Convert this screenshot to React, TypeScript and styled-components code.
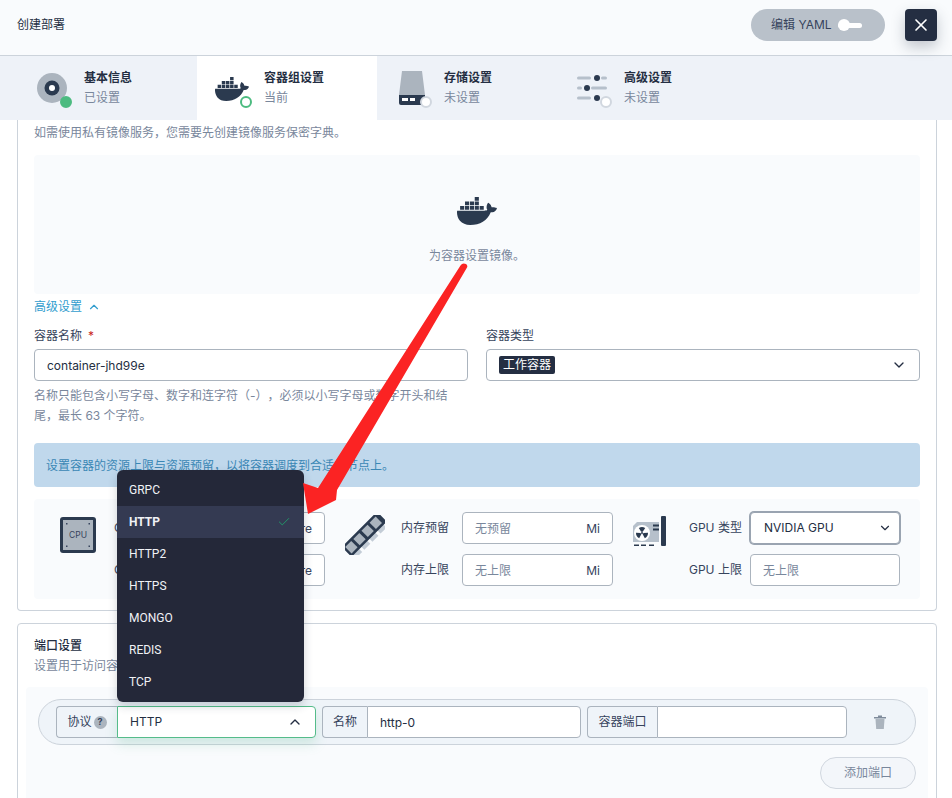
import styled, { createGlobalStyle } from "styled-components";
import { Check, ChevronDown, ChevronUp, X } from "lucide-react";
import { FaDocker } from "react-icons/fa";

const GlobalStyle = createGlobalStyle`
  html, body {
    margin: 0;
    height: 100%;
    overflow: hidden;
    background: #fff;
  }
  body {
    font-family: Inter, "Noto Sans CJK SC", "Noto Sans", sans-serif;
    font-size: 12px;
    line-height: 20px;
    color: #242e42;
    text-spacing-trim: space-all;
  }
  * {
    box-sizing: border-box;
  }
`;

const Page = styled.div`
  position: relative;
  width: 952px;
  height: 798px;
  overflow: hidden;
  background: #fff;
`;

const Header = styled.header`
  display: flex;
  align-items: center;
  justify-content: space-between;
  height: 56px;
  padding: 0 15px 5px 17px;
  background: #f9fbfd;
  border-bottom: 1px solid #ccd3db;
`;

const Title = styled.div`
  margin-bottom: 1px;
  color: #242e42;
`;

const HeaderActions = styled.div`
  display: flex;
  align-items: center;
  gap: 20px;
`;

const YamlButton = styled.div`
  display: flex;
  align-items: center;
  gap: 6px;
  width: 134px;
  height: 32px;
  padding-left: 20px;
  border-radius: 16px;
  background: #b9c1ca;
  color: #36435c;
`;

const YamlToggle = styled.span`
  position: relative;
  display: block;
  width: 24px;
  height: 5px;
  border-radius: 3px;
  background: #fff;

  &::before {
    content: "";
    position: absolute;
    left: 0;
    top: -3.5px;
    width: 12px;
    height: 12px;
    border-radius: 50%;
    background: #fff;
  }
`;

const CloseButton = styled.div`
  display: flex;
  align-items: center;
  justify-content: center;
  width: 32px;
  height: 32px;
  border-radius: 4px;
  background: #242e42;
  color: #fff;
  box-shadow: 0 6px 14px rgba(36, 46, 66, 0.25);
`;

const Steps = styled.nav`
  display: flex;
  height: 64px;
  padding-left: 17px;
  background: #eef2f8;
`;

const Step = styled.div<{ $active?: boolean }>`
  display: flex;
  align-items: center;
  gap: 9px;
  width: 180px;
  padding-left: 14px;
  background: ${(p) => (p.$active ? "#fff" : "transparent")};
`;

const StepGlyph = styled.div`
  position: relative;
  flex: none;
  width: 44px;
  height: 48px;
`;

const Whale = styled(FaDocker)`
  display: block;
  margin: 8px 0 0 4px;
  color: #2b3a4f;
`;

const StepBadge = styled.span<{ $state: "done" | "current" | "todo" }>`
  position: absolute;
  left: 29px;
  top: 32px;
  width: 12px;
  height: 12px;
  border-radius: 50%;
  background: ${(p) => (p.$state === "done" ? "#4cbb80" : "#fff")};
  border: 2px solid ${(p) => (p.$state === "todo" ? "#d1d7df" : "#4cbb80")};
`;

const StepTitle = styled.div`
  font-weight: 600;
  color: #242e42;
`;

const StepNote = styled.div`
  color: #79879c;
`;

const Body = styled.main`
  padding: 0 15px 0 17px;
`;

const Panel = styled.section<{ $open?: boolean }>`
  padding: ${(p) => (p.$open ? "3px" : "12px")} 16px 11px;
  border: 1px solid #ccd3db;
  border-top-width: ${(p) => (p.$open ? 0 : "1px")};
  border-radius: ${(p) => (p.$open ? "0 0 4px 4px" : "4px 4px 0 0")};
  background: #fff;

  & + & {
    margin-top: 12px;
  }
`;

const Muted = styled.div`
  color: #79879c;
`;

const EmptyImage = styled.div`
  display: flex;
  flex-direction: column;
  align-items: center;
  height: 139px;
  margin-top: 12px;
  padding-top: 36px;
  border-radius: 4px;
  background: #f9fbfd;
`;

const EmptyWhale = styled(FaDocker)`
  display: block;
  margin-bottom: 15px;
  color: #2b3a4f;
`;

const AdvancedLink = styled.div`
  display: flex;
  align-items: center;
  gap: 5px;
  margin-top: 3px;
  color: #329dce;
`;

const FieldGrid = styled.div`
  display: grid;
  grid-template-columns: 434px 434px;
  gap: 18px;
  margin-top: 9px;
`;

const FieldLabel = styled.label`
  display: block;
  margin-bottom: 3px;
  color: #36435c;
`;

const Required = styled.span`
  margin-left: 6px;
  color: #ca2621;
`;

const TextInput = styled.input`
  display: block;
  width: 100%;
  height: 32px;
  padding: 0 12px;
  border: 1px solid #abb4be;
  border-radius: 4px;
  background: #fff;
  outline: none;
  font: inherit;
  color: #242e42;

  &::placeholder {
    color: #79879c;
  }
`;

const SelectBox = styled.div<{ $focus?: boolean }>`
  display: flex;
  align-items: center;
  justify-content: space-between;
  height: 32px;
  padding: 0 ${(p) => (p.$focus ? "7px 0 13px" : "12px 0 12px")};
  border: 1px solid ${(p) => (p.$focus ? "#9aa4b1" : "#abb4be")};
  box-shadow: ${(p) => (p.$focus ? "0 0 0 1px #9aa4b1" : "none")};
  border-radius: 4px;
  background: #fff;
  color: #242e42;
`;

const KindTag = styled.span`
  padding: 0 4px;
  border-radius: 2px;
  background: #242e42;
  color: #fff;
  line-height: 18px;
`;

const FieldHelp = styled.div`
  width: 418px;
  margin-top: 5px;
  color: #79879c;
`;

const Banner = styled.div`
  height: 44px;
  margin-top: 17px;
  padding: 13px 12px;
  border-radius: 4px;
  background: #c0d8ec;
  color: #3a87b5;
`;

const Resources = styled.div`
  display: flex;
  height: 100px;
  margin-top: 12px;
  padding: 13px 0 0 24px;
  border-radius: 4px;
  background: #f9fbfd;
`;

const ResourceGroup = styled.div<{ $inputWidth: number; $iconGap: number; $after: number }>`
  display: grid;
  grid-template-columns: 40px ${(p) => p.$iconGap + 61}px ${(p) => p.$inputWidth}px;
  grid-auto-rows: 32px;
  row-gap: 10px;
  margin-right: ${(p) => p.$after}px;
`;

const ResourceIcon = styled.svg`
  grid-row: 1 / span 2;
  display: block;
  width: 40px;
  height: 40px;
  margin-top: 3px;
`;

const ResourceLabel = styled.div<{ $iconGap: number }>`
  grid-column: 2;
  display: flex;
  align-items: center;
  padding-left: ${(p) => p.$iconGap}px;
  color: #36435c;
`;

const UnitInput = styled.div`
  display: flex;
  align-items: center;
  height: 32px;
  padding: 1px 12px 0;
  border: 1px solid #abb4be;
  border-radius: 4px;
  background: #fff;
  color: #36435c;
`;

const BareInput = styled.input`
  flex: 1;
  min-width: 0;
  padding: 0;
  border: 0;
  outline: none;
  background: none;
  font: inherit;

  &::placeholder {
    color: #79879c;
  }
`;

const PanelTitle = styled.div`
  font-weight: 500;
  color: #242e42;
`;

const PortArea = styled.div`
  height: 130px;
  margin: 11px -8px 0;
  padding: 12px;
  border-radius: 4px;
  background: #f9fbfd;
`;

const PortRow = styled.div`
  display: flex;
  align-items: center;
  gap: 6px;
  height: 46px;
  padding-left: 17px;
  border: 1px solid #ccd3db;
  border-radius: 23px;
  background: #eff4f9;
`;

const Addon = styled.div<{ $width: number }>`
  display: flex;
  align-items: center;
  justify-content: center;
  gap: 2px;
  flex: none;
  width: ${(p) => p.$width}px;
  height: 32px;
  border: 1px solid #abb4be;
  border-right: 0;
  border-radius: 4px 0 0 4px;
  background: #eff4f9;
  color: #36435c;
`;

const InputGroup = styled.div`
  display: flex;
`;

const AddonInput = styled(TextInput)<{ $width: number }>`
  flex: none;
  width: ${(p) => p.$width}px;
  border-radius: 0 4px 4px 0;
`;

const ProtocolSelect = styled(SelectBox)`
  width: 199px;
  border-color: #55bc8a;
  border-radius: 0 4px 4px 0;
  box-shadow: 0 6px 12px rgba(85, 188, 138, 0.22);
`;

const HelpDot = styled.span`
  display: inline-flex;
  align-items: center;
  justify-content: center;
  width: 13px;
  height: 13px;
  border-radius: 50%;
  background: #abb4be;
  color: #36435c;
  font-size: 9px;
  font-weight: 700;
`;

const TrashButton = styled.div`
  display: flex;
  align-items: center;
  justify-content: center;
  width: 14px;
  margin-left: 20px;
`;

const PortFooter = styled.div`
  display: flex;
  justify-content: flex-end;
  margin-top: 12px;
`;

const AddPortButton = styled.div`
  display: flex;
  align-items: center;
  justify-content: center;
  width: 96px;
  height: 32px;
  border: 1px solid #d1d7df;
  border-radius: 16px;
  background: #f3f6fa;
  color: #79879c;
`;

const ProtocolMenu = styled.ul`
  position: absolute;
  left: 117px;
  top: 470px;
  width: 187px;
  height: 232px;
  margin: 0;
  padding: 4px 0;
  border-radius: 6px;
  background: #242839;
  list-style: none;
  box-shadow: 0 4px 10px rgba(36, 46, 66, 0.2);
  font-family: Roboto, "Noto Sans", sans-serif;
`;

const ProtocolItem = styled.li<{ $selected?: boolean }>`
  display: flex;
  align-items: center;
  justify-content: space-between;
  height: 32px;
  padding: 0 13px 0 12px;
  background: ${(p) => (p.$selected ? "#343a52" : "transparent")};
  color: #f0f2f6;
  font-weight: ${(p) => (p.$selected ? 700 : 400)};
`;

const Annotation = styled.svg`
  position: absolute;
  left: 0;
  top: 0;
  width: 952px;
  height: 798px;
  pointer-events: none;
`;

const protocols = ["GRPC", "HTTP", "HTTP2", "HTTPS", "MONGO", "REDIS", "TCP"];

function DiscGlyph() {
  return (
    <svg width="44" height="48" viewBox="0 0 44 48">
      <circle cx="21" cy="24" r="15" fill="#abb4be" />
      <circle cx="21" cy="24" r="7.5" fill="#2b3a4f" />
      <circle cx="21" cy="24" r="3" fill="#fff" />
    </svg>
  );
}

function DiskGlyph() {
  return (
    <svg width="44" height="48" viewBox="0 0 44 48">
      <path d="M11 7h20l3 24H8z" fill="#abb4be" />
      <path d="M8 31h26v10H10a2 2 0 0 1-2-2z" fill="#2b3a4f" />
      <rect x="11" y="34" width="6" height="3" fill="#fff" />
      <rect x="19" y="34" width="5" height="3" fill="#fff" />
    </svg>
  );
}

function SlidersGlyph() {
  return (
    <svg width="44" height="48" viewBox="0 0 44 48">
      <g fill="#b6c0cb">
        <rect x="6" y="12.5" width="14" height="3" rx="1.5" />
        <rect x="30" y="12.5" width="6" height="3" rx="1.5" />
        <rect x="6" y="22.5" width="5" height="3" rx="1.5" />
        <rect x="20" y="22.5" width="16" height="3" rx="1.5" />
        <rect x="6" y="32.5" width="14" height="3" rx="1.5" />
      </g>
      <g fill="#2b3a4f">
        <circle cx="26" cy="14" r="3" />
        <circle cx="16" cy="24" r="3" />
        <circle cx="26" cy="34" r="3" />
      </g>
    </svg>
  );
}

function CpuIcon() {
  return (
    <ResourceIcon viewBox="0 0 40 40">
      <rect x="2" y="2" width="36" height="36" rx="3" fill="#2b3a4f" />
      <rect x="5" y="5" width="30" height="30" fill="#abb4be" />
      <g fill="#36435c">
        <rect x="8" y="8" width="1.5" height="1.5" />
        <rect x="30.5" y="8" width="1.5" height="1.5" />
        <rect x="8" y="30.5" width="1.5" height="1.5" />
        <rect x="30.5" y="30.5" width="1.5" height="1.5" />
      </g>
      <text x="20" y="23" textAnchor="middle" fontSize="8.5" fill="#36435c">
        CPU
      </text>
    </ResourceIcon>
  );
}

function MemoryIcon() {
  const slots = [-2.5, 9, 20.5, 32];
  return (
    <ResourceIcon viewBox="0 0 40 40">
      <g transform="rotate(-45 20 20)">
        {/* shadow edge with the contact notches */}
        {slots.map((x) => (
          <rect key={x} x={x} y="24" width="8.5" height="6" fill="#c3ccd6" />
        ))}
        <rect x="-5" y="12" width="50" height="14" rx="1.5" fill="#2b3a4f" />
        {slots.map((x) => (
          <rect key={x} x={x} y="14.5" width="8.5" height="9" fill="#abb4be" />
        ))}
      </g>
    </ResourceIcon>
  );
}

function GpuIcon() {
  return (
    <ResourceIcon viewBox="0 0 40 40">
      <path d="M7 7h22v20H3V11z" fill="#b6c0cb" />
      <circle cx="12" cy="18" r="8" fill="#fff" />
      <g fill="#2b3a4f">
        {[0, 120, 240].map((deg) => (
          <path
            key={deg}
            transform={`rotate(${deg} 12 18)`}
            d="M8.82 12.91A6 6 0 0 1 15.18 12.91L12.8 16.73H11.2Z"
          />
        ))}
        <circle cx="12" cy="18" r="1" />
        <rect x="23" y="9.5" width="6" height="2" />
        <rect x="23" y="13.5" width="6" height="2" />
        <rect x="31" y="1" width="5" height="30" rx="1" />
        <rect x="4" y="29.5" width="5" height="1.5" />
        <rect x="11" y="29.5" width="5" height="1.5" />
        <rect x="19" y="29.5" width="5" height="1.5" />
      </g>
    </ResourceIcon>
  );
}

function TrashIcon() {
  return (
    <svg width="14" height="16" viewBox="0 0 14 16">
      <path d="M1 3h12v1.5H1zM5 1.5h4V3H5z" fill="#7f8b9b" />
      <path d="M2.5 5h9l-.7 10H3.2z" fill="#abb4be" />
    </svg>
  );
}

export default function App() {
  return (
    <Page>
      <GlobalStyle />
      <Header>
        <Title>创建部署</Title>
        <HeaderActions>
          <YamlButton>
            编辑 YAML
            <YamlToggle />
          </YamlButton>
          <CloseButton>
            <X size={20} strokeWidth={2} />
          </CloseButton>
        </HeaderActions>
      </Header>

      <Steps>
        <Step>
          <StepGlyph>
            <DiscGlyph />
            <StepBadge $state="done" />
          </StepGlyph>
          <div>
            <StepTitle>基本信息</StepTitle>
            <StepNote>已设置</StepNote>
          </div>
        </Step>
        <Step $active>
          <StepGlyph>
            <Whale size={34} />
            <StepBadge $state="current" />
          </StepGlyph>
          <div>
            <StepTitle>容器组设置</StepTitle>
            <StepNote>当前</StepNote>
          </div>
        </Step>
        <Step>
          <StepGlyph>
            <DiskGlyph />
            <StepBadge $state="todo" />
          </StepGlyph>
          <div>
            <StepTitle>存储设置</StepTitle>
            <StepNote>未设置</StepNote>
          </div>
        </Step>
        <Step>
          <StepGlyph>
            <SlidersGlyph />
            <StepBadge $state="todo" />
          </StepGlyph>
          <div>
            <StepTitle>高级设置</StepTitle>
            <StepNote>未设置</StepNote>
          </div>
        </Step>
      </Steps>

      <Body>
        <Panel $open>
          <Muted>如需使用私有镜像服务，您需要先创建镜像服务保密字典。</Muted>
          <EmptyImage>
            <EmptyWhale size={40} />
            <Muted>为容器设置镜像。</Muted>
          </EmptyImage>
          <AdvancedLink>
            高级设置
            <ChevronUp size={14} strokeWidth={2} />
          </AdvancedLink>

          <FieldGrid>
            <div>
              <FieldLabel>
                容器名称<Required>*</Required>
              </FieldLabel>
              <TextInput defaultValue="container-jhd99e" />
              <FieldHelp>
                名称只能包含小写字母、数字和连字符（-），必须以小写字母或数字开头和结尾，最长 63 个字符。
              </FieldHelp>
            </div>
            <div>
              <FieldLabel>容器类型</FieldLabel>
              <SelectBox>
                <KindTag>工作容器</KindTag>
                <ChevronDown size={16} strokeWidth={2} />
              </SelectBox>
            </div>
          </FieldGrid>

          <Banner>设置容器的资源上限与资源预留，以将容器调度到合适的节点上。</Banner>

          <Resources>
            <ResourceGroup $inputWidth={150} $iconGap={16} $after={20}>
              <CpuIcon />
              <ResourceLabel $iconGap={16}>CPU 预留</ResourceLabel>
              <UnitInput>
                <BareInput placeholder="无预留" />
                Core
              </UnitInput>
              <ResourceLabel $iconGap={16}>CPU 上限</ResourceLabel>
              <UnitInput>
                <BareInput placeholder="无上限" />
                Core
              </UnitInput>
            </ResourceGroup>
            <ResourceGroup $inputWidth={151} $iconGap={16} $after={17}>
              <MemoryIcon />
              <ResourceLabel $iconGap={16}>内存预留</ResourceLabel>
              <UnitInput>
                <BareInput placeholder="无预留" />
                Mi
              </UnitInput>
              <ResourceLabel $iconGap={16}>内存上限</ResourceLabel>
              <UnitInput>
                <BareInput placeholder="无上限" />
                Mi
              </UnitInput>
            </ResourceGroup>
            <ResourceGroup $inputWidth={150} $iconGap={19} $after={0}>
              <GpuIcon />
              <ResourceLabel $iconGap={19}>GPU 类型</ResourceLabel>
              <SelectBox $focus>
                NVIDIA GPU
                <ChevronDown size={14} strokeWidth={2} />
              </SelectBox>
              <ResourceLabel $iconGap={19}>GPU 上限</ResourceLabel>
              <UnitInput>
                <BareInput placeholder="无上限" />
              </UnitInput>
            </ResourceGroup>
          </Resources>
        </Panel>

        <Panel>
          <PanelTitle>端口设置</PanelTitle>
          <Muted>设置用于访问容器的端口。</Muted>
          <PortArea>
            <PortRow>
              <InputGroup>
                <Addon $width={61}>
                  协议 <HelpDot>?</HelpDot>
                </Addon>
                <ProtocolSelect>
                  HTTP
                  <ChevronUp size={16} strokeWidth={2} />
                </ProtocolSelect>
              </InputGroup>
              <InputGroup>
                <Addon $width={45}>名称</Addon>
                <AddonInput $width={214} defaultValue="http-0" />
              </InputGroup>
              <InputGroup>
                <Addon $width={70}>容器端口</Addon>
                <AddonInput $width={190} />
              </InputGroup>
              <TrashButton>
                <TrashIcon />
              </TrashButton>
            </PortRow>
            <PortFooter>
              <AddPortButton>添加端口</AddPortButton>
            </PortFooter>
          </PortArea>
        </Panel>
      </Body>

      <ProtocolMenu>
        {protocols.map((name) => (
          <ProtocolItem key={name} $selected={name === "HTTP"}>
            {name}
            {name === "HTTP" && <Check size={14} strokeWidth={1.5} color="#1fa06c" />}
          </ProtocolItem>
        ))}
      </ProtocolMenu>

      <Annotation viewBox="0 0 952 798">
        <path
          d="M460.5 265.5Q462.5 262.5 466 264Q468 265.5 467 267.5L337 490L336 500L308 514L303 483L318 488Z"
          fill="#fb2323"
        />
      </Annotation>
    </Page>
  );
}
